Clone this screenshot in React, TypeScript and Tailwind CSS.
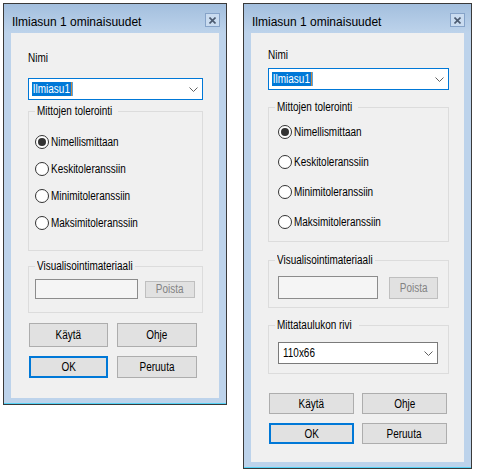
import React from 'react';

// kapea teksti: Liberation Sans puristettuna, jotta leveys vastaa kuvaa
function Txt({ children, className = 'origin-left' }: { children: React.ReactNode; className?: string }) {
  return <span className={`inline-block scale-x-[0.83] whitespace-nowrap ${className}`}>{children}</span>;
}

function CloseButton() {
  return (
    <div className="mt-[9px] mr-[6px] flex h-[14px] w-[15px] items-center justify-center border border-[#86a3c8] bg-[#cadcf0]">
      <svg width="7" height="7" viewBox="0 0 7 7">
        <path d="M0.5 0.5 L6.5 6.5 M6.5 0.5 L0.5 6.5" stroke="#4c5b70" strokeWidth="1.6" />
      </svg>
    </div>
  );
}

function Chevron() {
  return (
    <svg width="9" height="5" viewBox="0 0 9 5" className="shrink-0">
      <path d="M0.5 0.5 L4.5 4.5 L8.5 0.5" fill="none" stroke="#606060" strokeWidth="1" />
    </svg>
  );
}

function Window({ className, children }: { className: string; children: React.ReactNode }) {
  return (
    <div className={`flex shrink-0 flex-col border border-[#3a3a3a] bg-[#bdd3eb] ${className}`}>
      <div className="flex h-[29px] shrink-0 justify-between bg-linear-to-b from-[#a3bfde] to-[#bdd3eb]">
        <span className="pl-[8px] pt-[10px] font-['Liberation_Sans',Arial,sans-serif] text-[12px] leading-[16px] text-black">
          Ilmiasun 1 ominaisuudet
        </span>
        <CloseButton />
      </div>
      <div className="mx-[7px] flex-1 bg-[#f0f0f0]">{children}</div>
      <div className="h-[6px] shrink-0 border-b border-[#55d3f6]" />
    </div>
  );
}

function Radio({ label, checked }: { label: string; checked?: boolean }) {
  return (
    <div className="flex h-[14px] items-center gap-[2px]">
      <span className="flex h-[14px] w-[14px] shrink-0 items-center justify-center rounded-full border border-[#333333] bg-white">
        {checked && <span className="h-[8px] w-[8px] rounded-full bg-[#333333]" />}
      </span>
      <Txt>{label}</Txt>
    </div>
  );
}

function Btn({ className, children }: { className: string; children: React.ReactNode }) {
  return (
    <div className={`flex items-center justify-center bg-[#e1e1e1] ${className}`}>
      <Txt className="origin-center">{children}</Txt>
    </div>
  );
}

function NameCombo({ className }: { className: string }) {
  return (
    <div className={`flex h-[22px] items-center justify-between border border-[#0078d7] bg-white pl-[3px] pr-[4px] ${className}`}>
      <Txt>
        <span className="flex h-[14px] items-center bg-[#0078d7] px-[1px] text-white">
          Ilmiasu1
          <span className="ml-[1px] h-[14px] w-[1px] bg-[#f08a24]" />
        </span>
      </Txt>
      <Chevron />
    </div>
  );
}

function Legend({ className, children }: { className: string; children: React.ReactNode }) {
  return (
    <legend className={`overflow-visible px-[2px] ${className}`}>
      <Txt>{children}</Txt>
    </legend>
  );
}

export default function App() {
  return (
    <div className="flex min-h-screen items-start gap-[16px] bg-white pl-[3px] pt-[3px] font-['Liberation_Sans',Arial,sans-serif] text-[12px] leading-[14px] text-black">
      {/* vasen ikkuna */}
      <Window className="h-[402px] w-[224px]">
        <div className="flex flex-col pl-[17px] pt-[18px]">
          <div className="h-[14px]">
            <Txt>Nimi</Txt>
          </div>
          <NameCombo className="mt-[13px] w-[175px]" />
          <fieldset className="mt-[4px] h-[147px] w-[175px] border border-[#dcdcdc] px-[6px]">
            <Legend className="w-[83px]">Mittojen tolerointi</Legend>
            <div className="mt-[17px] flex flex-col gap-[13px]">
              <Radio checked label="Nimellismittaan" />
              <Radio label="Keskitoleranssiin" />
              <Radio label="Minimitoleranssiin" />
              <Radio label="Maksimitoleranssiin" />
            </div>
          </fieldset>
          <fieldset className="mt-[8px] h-[54px] w-[175px] border border-[#dcdcdc] px-[6px]">
            <Legend className="w-[100px]">Visualisointimateriaali</Legend>
            <div className="mt-[6px] flex items-center gap-[7px]">
              <div className="h-[20px] w-[103px] border border-[#8c8c8c] bg-[#f5f5f5]" />
              <Btn className="h-[17px] w-[50px] border border-[#bfbfbf] bg-[#cccccc] text-[#838383]">Poista</Btn>
            </div>
          </fieldset>
          <div className="mt-[10px] flex gap-[9px] pl-[1px]">
            <Btn className="h-[24px] w-[79px] border border-[#adadad]">Käytä</Btn>
            <Btn className="h-[24px] w-[80px] border border-[#adadad]">Ohje</Btn>
          </div>
          <div className="mt-[9px] flex gap-[9px] pl-[1px]">
            <Btn className="h-[22px] w-[79px] border-2 border-[#0078d7]">OK</Btn>
            <Btn className="h-[22px] w-[80px] border border-[#adadad]">Peruuta</Btn>
          </div>
        </div>
      </Window>

      {/* oikea ikkuna */}
      <Window className="h-[466px] w-[229px]">
        <div className="flex flex-col pl-[17px] pt-[15px]">
          <div className="h-[14px]">
            <Txt>Nimi</Txt>
          </div>
          <NameCombo className="mt-[6px] w-[181px]" />
          <fieldset className="mt-[10px] h-[142px] w-[181px] border border-[#dcdcdc] px-[9px]">
            <Legend className="-ml-[3px] w-[83px]">Mittojen tolerointi</Legend>
            <div className="mt-[11px] flex flex-col gap-[16px]">
              <Radio checked label="Nimellismittaan" />
              <Radio label="Keskitoleranssiin" />
              <Radio label="Minimitoleranssiin" />
              <Radio label="Maksimitoleranssiin" />
            </div>
          </fieldset>
          <fieldset className="mt-[11px] h-[55px] w-[181px] border border-[#dcdcdc] px-[9px]">
            <Legend className="-ml-[3px] w-[100px]">Visualisointimateriaali</Legend>
            <div className="mt-[9px] flex items-center gap-[11px]">
              <div className="h-[23px] w-[100px] border border-[#8c8c8c] bg-[#f5f5f5]" />
              <Btn className="h-[22px] w-[49px] border border-[#bfbfbf] bg-[#cccccc] text-[#838383]">Poista</Btn>
            </div>
          </fieldset>
          <fieldset className="mt-[10px] h-[56px] w-[181px] border border-[#dcdcdc] px-[9px]">
            <Legend className="-ml-[3px] w-[84px]">Mittataulukon rivi</Legend>
            <div className="mt-[10px] flex h-[22px] w-[160px] items-center justify-between border border-[#7a7a7a] bg-white pl-[4px] pr-[4px]">
              <Txt>110x66</Txt>
              <Chevron />
            </div>
          </fieldset>
          <div className="mt-[19px] flex gap-[8px] pl-[1px]">
            <Btn className="h-[21px] w-[85px] border border-[#adadad]">Käytä</Btn>
            <Btn className="h-[21px] w-[85px] border border-[#adadad]">Ohje</Btn>
          </div>
          <div className="mt-[9px] flex gap-[8px] pl-[1px]">
            <Btn className="h-[21px] w-[85px] border-2 border-[#0078d7]">OK</Btn>
            <Btn className="h-[21px] w-[85px] border border-[#adadad]">Peruuta</Btn>
          </div>
        </div>
      </Window>
    </div>
  );
}
